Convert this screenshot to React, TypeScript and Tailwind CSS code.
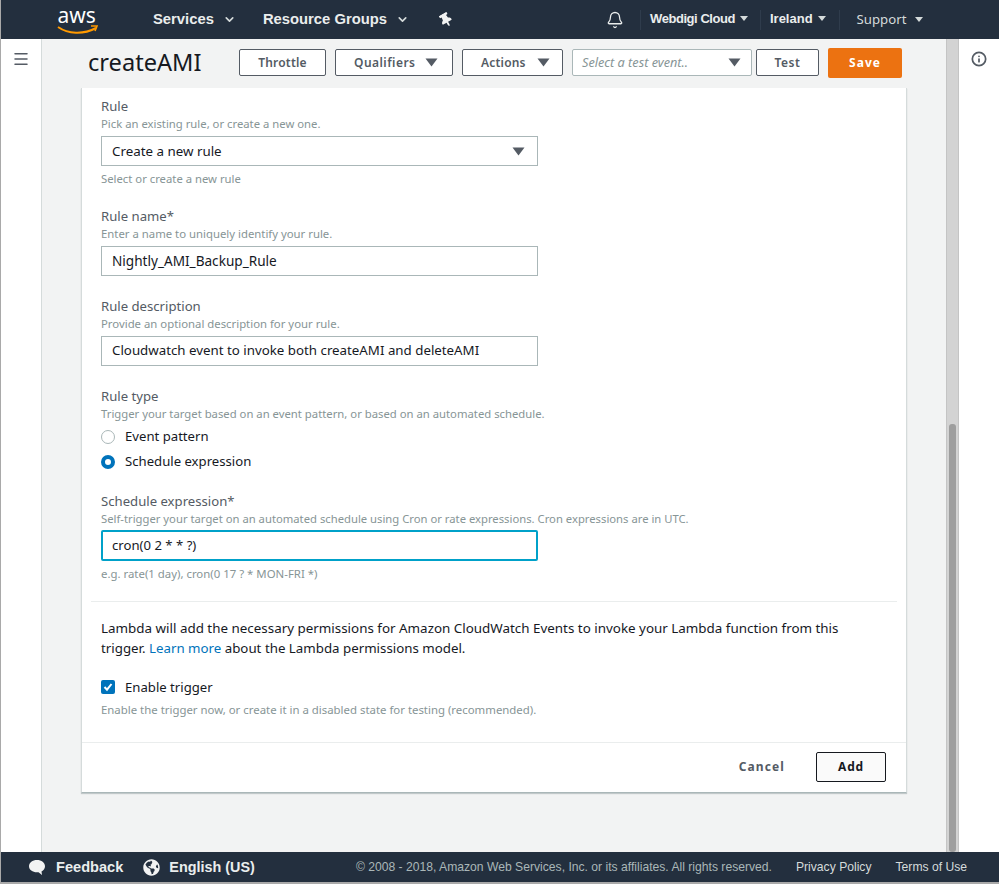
import { Bell, ChevronDown, Info, Menu } from "lucide-react";
import { FaGlobeAmericas, FaThumbtack } from "react-icons/fa";

const font = "font-['Noto_Sans',sans-serif]";
const arial = "font-['Liberation_Sans',sans-serif]";

function Caret({ className = "" }: { className?: string }) {
  return (
    <svg width="13" height="9" viewBox="0 0 13 9" className={className}>
      <path d="M0.5 0.5h12L6.5 8.5z" fill="#545b64" />
    </svg>
  );
}

function SmallCaret({ className = "ml-[5px]" }: { className?: string }) {
  return (
    <svg width="8" height="5" viewBox="0 0 8 5" className={className}>
      <path d="M0 0h8L4 5z" fill="#d5dbdb" />
    </svg>
  );
}

function Field({
  label,
  hint,
  value,
  valueSize,
  className = "",
}: {
  label: string;
  hint: string;
  value: string;
  valueSize: string;
  className?: string;
}) {
  return (
    <div className={className}>
      <div className="text-[13.15px] leading-[18px] text-[#545b64]">{label}</div>
      <div className="mt-[2px] text-[11.35px] leading-[14px] text-[#879596]">{hint}</div>
      <div className={`mt-[5px] flex h-[30px] w-[437px] items-center border border-[#aab7b8] bg-white pl-[10px] text-[#16191f] ${valueSize}`}>
        {value}
      </div>
    </div>
  );
}

export default function App() {
  return (
    <div className={`${font} flex h-[884px] w-[999px] flex-col overflow-hidden border-b-2 border-l border-[#a9a9a9] bg-white`}>
      <header className={`${arial} flex h-[39px] shrink-0 items-center bg-[#232f3e] text-white`}>
        <svg width="46" height="36" viewBox="0 0 46 36" className="ml-[56px]">
          <text x="0.5" y="21" fill="#ffffff" fontSize="21" fontFamily="Noto Sans, sans-serif">aws</text>
          <path d="M1 25c10 7 25 8 38 1" fill="none" stroke="#f90" strokeWidth="2" />
          <path d="M34 24l6 0-2 5" fill="none" stroke="#f90" strokeWidth="1.6" />
        </svg>
        <span className="ml-[50px] text-[14.8px] font-bold text-[#eaeded]">Services</span>
        <ChevronDown size={13} strokeWidth={3} className="ml-[9px] text-[#d5dbdb]" />
        <span className="ml-[27px] text-[14.8px] font-bold text-[#eaeded]">Resource Groups</span>
        <ChevronDown size={13} strokeWidth={3} className="ml-[9px] text-[#d5dbdb]" />
        <FaThumbtack size={14} className="ml-[30px] -rotate-30 text-[#f2f3f3]" />
        <Bell size={18} strokeWidth={1.7} className="ml-[153px] text-[#eaeded]" />
        <div className="ml-[16px] flex h-[20px] items-center border-l border-[#2f3c4c] pb-[2px] pl-[9px] text-[13px] font-bold tracking-[-0.45px] text-[#eaeded]">
          Webdigi Cloud
          <SmallCaret />
        </div>
        <div className="ml-[12px] flex h-[20px] items-center border-l border-[#2f3c4c] pb-[2px] pl-[9px] text-[13px] font-bold text-[#eaeded]">
          Ireland
          <SmallCaret />
        </div>
        <div className={`${font} ml-[13px] flex h-[20px] items-center border-l border-[#2f3c4c] pl-[17px] text-[13.2px] text-[#d5dbdb]`}>
          Support
          <SmallCaret className="ml-[9px]" />
        </div>
      </header>

      <div className="flex min-h-0 flex-1">
        <aside className="flex w-[41px] shrink-0 justify-center border-r border-[#d5dbdb] bg-white pt-[11px]">
          <Menu size={18} className="text-[#545b64]" />
        </aside>

        <main className="relative flex min-w-0 flex-1 flex-col overflow-hidden bg-[#f2f3f3]">
          <div className="flex h-[49px] shrink-0 items-center pb-[2px] pl-[46px]">
            <h1 className="w-[151px] text-[23.6px] leading-none text-[#16191f]">createAMI</h1>
            <button className="h-[27px] w-[87px] rounded-[2px] border border-[#545b64] bg-white text-[12px] font-semibold tracking-[0.2px] text-[#545b64]">Throttle</button>
            <button className="ml-[9px] flex h-[27px] w-[118px] items-center gap-[10px] rounded-[2px] border border-[#545b64] bg-white pl-[18px] text-[12px] font-semibold tracking-[0.45px] text-[#545b64]">
              Qualifiers <Caret />
            </button>
            <button className="ml-[9px] flex h-[27px] w-[101px] items-center gap-[11px] rounded-[2px] border border-[#545b64] bg-white pl-[18px] text-[12px] font-semibold tracking-[0.2px] text-[#545b64]">
              Actions <Caret />
            </button>
            <div className="ml-[9px] flex h-[27px] w-[180px] items-center justify-between rounded-[2px] border border-[#aab7b8] bg-white pl-[9px] pr-[10px] text-[12.7px] italic text-[#879596]">
              Select a test event..
              <Caret />
            </div>
            <button className="ml-[4px] h-[27px] w-[63px] rounded-[2px] border border-[#545b64] bg-white text-[12px] font-semibold tracking-[0.5px] text-[#545b64]">Test</button>
            <button className="ml-[9px] h-[30px] w-[74px] rounded-[2px] bg-[#ec7211] text-[12px] font-bold tracking-[1px] text-white">Save</button>
          </div>

          <div className="ml-[39px] w-[826px] border-b border-l border-r border-[#d5dbdb] border-b-[#aab7b8] bg-white shadow-[0_1px_1px_rgba(0,28,36,0.2)]">
            <div className="px-[19px] pt-[9px]">
              <div className="text-[13.15px] leading-[18px] text-[#545b64]">Rule</div>
              <div className="mt-[2px] text-[11.3px] leading-[14px] text-[#879596]">Pick an existing rule, or create a new one.</div>
              <div className="mt-[5px] flex h-[30px] w-[437px] items-center justify-between border border-[#aab7b8] bg-white pl-[10px] pr-[12px] text-[13.35px] text-[#16191f]">
                Create a new rule
                <Caret />
              </div>
              <div className="mt-[6px] text-[11.3px] leading-[14px] text-[#879596]">Select or create a new rule</div>

              <Field className="mt-[21px]" label="Rule name*" hint="Enter a name to uniquely identify your rule." value="Nightly_AMI_Backup_Rule" valueSize="text-[13.6px]" />
              <Field className="mt-[21px]" label="Rule description" hint="Provide an optional description for your rule." value="Cloudwatch event to invoke both createAMI and deleteAMI" valueSize="text-[13.3px]" />

              <div className="mt-[21px] text-[13.15px] leading-[18px] text-[#545b64]">Rule type</div>
              <div className="mt-[2px] text-[11.3px] leading-[14px] text-[#879596]">Trigger your target based on an event pattern, or based on an automated schedule.</div>
              <div className="mt-[7px] flex h-[18px] items-center text-[13.15px] text-[#16191f]">
                <span className="mr-[10px] h-[14px] w-[14px] rounded-full border border-[#aab7b8] bg-white" />
                Event pattern
              </div>
              <div className="mt-[7px] flex h-[18px] items-center text-[13.15px] text-[#16191f]">
                <span className="mr-[10px] h-[14px] w-[14px] rounded-full border-[4px] border-[#0073bb] bg-white" />
                Schedule expression
              </div>

              <div className="mt-[21px] text-[13.15px] leading-[18px] text-[#545b64]">Schedule expression*</div>
              <div className="mt-[2px] text-[11.27px] leading-[14px] text-[#879596]">Self-trigger your target on an automated schedule using Cron or rate expressions. Cron expressions are in UTC.</div>
              <div className="mt-[4px] flex h-[31px] w-[437px] items-center rounded-[2px] border-2 border-[#00a1c9] bg-white pl-[9px] text-[13.15px] text-[#16191f]">
                cron(0 2 * * ?)
              </div>
              <div className="mt-[6px] text-[11.4px] leading-[14px] text-[#879596]">e.g. rate(1 day), cron(0 17 ? * MON-FRI *)</div>
            </div>

            <div className="mx-[9px] mt-[20px] border-t border-[#eaeded]" />

            <div className="px-[19px] pt-[16px] text-[13.4px] leading-[20px] text-[#16191f]">
              <p>
                Lambda will add the necessary permissions for Amazon CloudWatch Events to invoke your Lambda function from this
                <br />
                <span className="text-[13.3px]">
                  trigger. <span className="text-[#0073bb]">Learn more</span> about the Lambda permissions model.
                </span>
              </p>
              <div className="mt-[20px] flex h-[18px] items-center text-[13.15px]">
                <span className="mr-[10px] flex h-[14px] w-[14px] items-center justify-center rounded-[2px] bg-[#0073bb]">
                  <svg width="10" height="10" viewBox="0 0 10 10">
                    <path d="M1.500 5l2.500 2.700L8.500 2" fill="none" stroke="#ffffff" strokeWidth="2" />
                  </svg>
                </span>
                Enable trigger
              </div>
              <div className="mt-[7px] text-[11.4px] leading-[14px] text-[#879596]">Enable the trigger now, or create it in a disabled state for testing (recommended).</div>
            </div>

            <div className="mt-[25px] flex h-[50px] items-center justify-end border-t border-[#eaeded] pb-[1px] pr-[20px]">
              <span className="mr-[31px] text-[12px] font-bold tracking-[1.1px] text-[#545b64]">Cancel</span>
              <button className="h-[30px] w-[70px] rounded-[2px] border border-[#16191f] bg-[#fafafa] text-[12px] font-bold tracking-[0.8px] text-[#16191f]">Add</button>
            </div>
          </div>

          <div className="absolute bottom-0 right-0 top-0 flex w-[13px] items-end justify-center border-l border-r border-[#c4c4c4] bg-[#d3d3d3]">
            <div className="h-[428px] w-[7px] rounded-[3px] bg-[#9e9e9e]" />
          </div>
        </main>

        <aside className="flex w-[40px] shrink-0 justify-center bg-white pt-[12px]">
          <Info size={16} strokeWidth={2.6} className="text-[#545b64]" />
        </aside>
      </div>

      <footer className={`${arial} flex h-[30px] shrink-0 items-center bg-[#232f3e] text-[12.15px] text-[#d5dbdb]`}>
        <svg width="18" height="17" viewBox="0 0 18 17" className="ml-[27px]">
          <path d="M9 1C4.500 1 1 3.700 1 7.200c0 3.400 3.500 6.100 8 6.100h1.500l3.500 2.700-.5-3.500c2.300-1.100 3.500-3.100 3.500-5.300C17 3.700 13.500 1 9 1z" fill="#f2f3f3" />
        </svg>
        <span className="ml-[10px] mt-[1px] text-[14.6px] font-bold text-[#eaeded]">Feedback</span>
        <FaGlobeAmericas size={17} className="ml-[20px] text-[#f2f3f3]" />
        <span className="ml-[9px] mt-[1px] text-[14.4px] font-bold text-[#eaeded]">English (US)</span>
        <span className="ml-[101px] text-[#aab7b8]">© 2008 - 2018, Amazon Web Services, Inc. or its affiliates. All rights reserved.</span>
        <span className="ml-[24px]">Privacy Policy</span>
        <span className="ml-[24px]">Terms of Use</span>
      </footer>
    </div>
  );
}
